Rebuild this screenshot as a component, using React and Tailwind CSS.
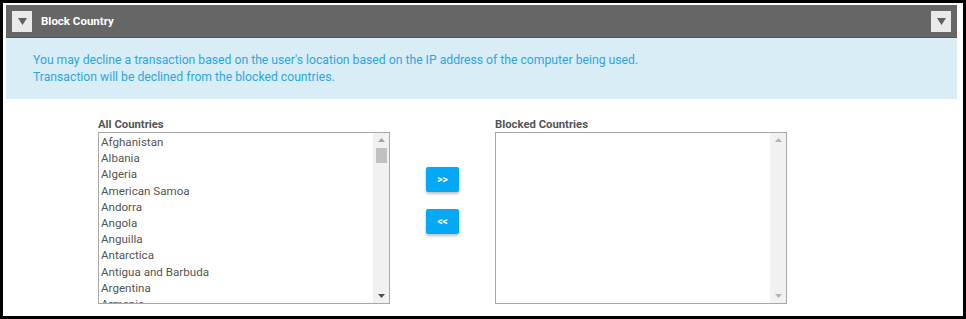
import React from "react";

const countries = [
  "Afghanistan",
  "Albania",
  "Algeria",
  "American Samoa",
  "Andorra",
  "Angola",
  "Anguilla",
  "Antarctica",
  "Antigua and Barbuda",
  "Argentina",
  "Armenia",
];

function Toggle() {
  return (
    <div className="w-[20px] h-[21px] bg-[#e9e9e9] flex items-center justify-center">
      <svg width="9" height="7" viewBox="0 0 9 7">
        <polygon points="0,0 9,0 4.5,7" fill="#5f5f5f" />
      </svg>
    </div>
  );
}

function Arrow({ up, color }) {
  return (
    <svg width="7" height="4" viewBox="0 0 7 4">
      {up ? (
        <polygon points="0,4 7,4 3.5,0" fill={color} />
      ) : (
        <polygon points="0,0 7,0 3.5,4" fill={color} />
      )}
    </svg>
  );
}

function ListBox({ items, thumb }) {
  return (
    <div className="relative w-[292px] h-[172px] border border-[#a9a9a9] bg-white overflow-hidden flex">
      <div className="flex-1 overflow-hidden pl-[2px] pt-[1px]">
        {items.map((c) => (
          <div
            key={c}
            className="h-[16.2px] leading-[16.2px] text-[11.6px] text-[#555555] whitespace-nowrap"
          >
            {c}
          </div>
        ))}
      </div>
      <div className="w-[16px] h-full bg-[#f1f1f1] flex flex-col items-center">
        <div className="h-[14px] flex items-center justify-center">
          <Arrow up color={thumb ? "#a3a3a3" : "#b5b5b5"} />
        </div>
        {thumb ? (
          <div className="w-[11px] h-[15px] bg-[#c1c1c1] mt-[1px]" />
        ) : null}
        <div className="flex-1" />
        <div className="h-[14px] flex items-center justify-center">
          <Arrow color={thumb ? "#505050" : "#b5b5b5"} />
        </div>
      </div>
    </div>
  );
}

function MoveButton({ label }) {
  return (
    <button className="w-[33px] h-[25px] bg-[#03a9f4] text-white text-[10px] font-bold rounded-[2px] shadow-[0_2px_3px_rgba(0,0,0,0.25)] flex items-center justify-center leading-none">
      {label}
    </button>
  );
}

export default function App() {
  return (
    <div
      className="w-[966px] h-[319px] border-[3px] border-black bg-white overflow-hidden"
      style={{ fontFamily: "Roboto, 'Liberation Sans', Arial, sans-serif" }}
    >
      <div className="pt-[2px] pl-[3px] pr-[6px]">
        <div className="h-[33px] bg-[#666666] border-b border-[#555555] flex items-center px-[6px]">
          <Toggle />
          <div className="ml-[9px] pt-[2px] text-white text-[11.5px] font-bold flex-1">
            Block Country
          </div>
          <Toggle />
        </div>
        <div className="h-[61px] bg-[#d9edf7] pl-[27px] pt-[14px] text-[12.2px] leading-[17px] text-[#2ea6e5]">
          <div>
            You may decline a transaction based on the user's location based
            on the IP address of the computer being used.
          </div>
          <div>Transaction will be declined from the blocked countries.</div>
        </div>
        <div className="flex pl-[92px] pt-[19px]">
          <div className="flex flex-col">
            <div className="text-[11.3px] font-bold text-[#555555] leading-[14px]">
              All Countries
            </div>
            <ListBox items={countries} thumb />
          </div>
          <div className="flex flex-col ml-[36px] w-[33px] pt-[49px] gap-[17px]">
            <MoveButton label=">>" />
            <MoveButton label="<<" />
          </div>
          <div className="flex flex-col ml-[36px]">
            <div className="text-[11.3px] font-bold text-[#555555] leading-[14px]">
              Blocked Countries
            </div>
            <ListBox items={[]} />
          </div>
        </div>
      </div>
    </div>
  );
}
